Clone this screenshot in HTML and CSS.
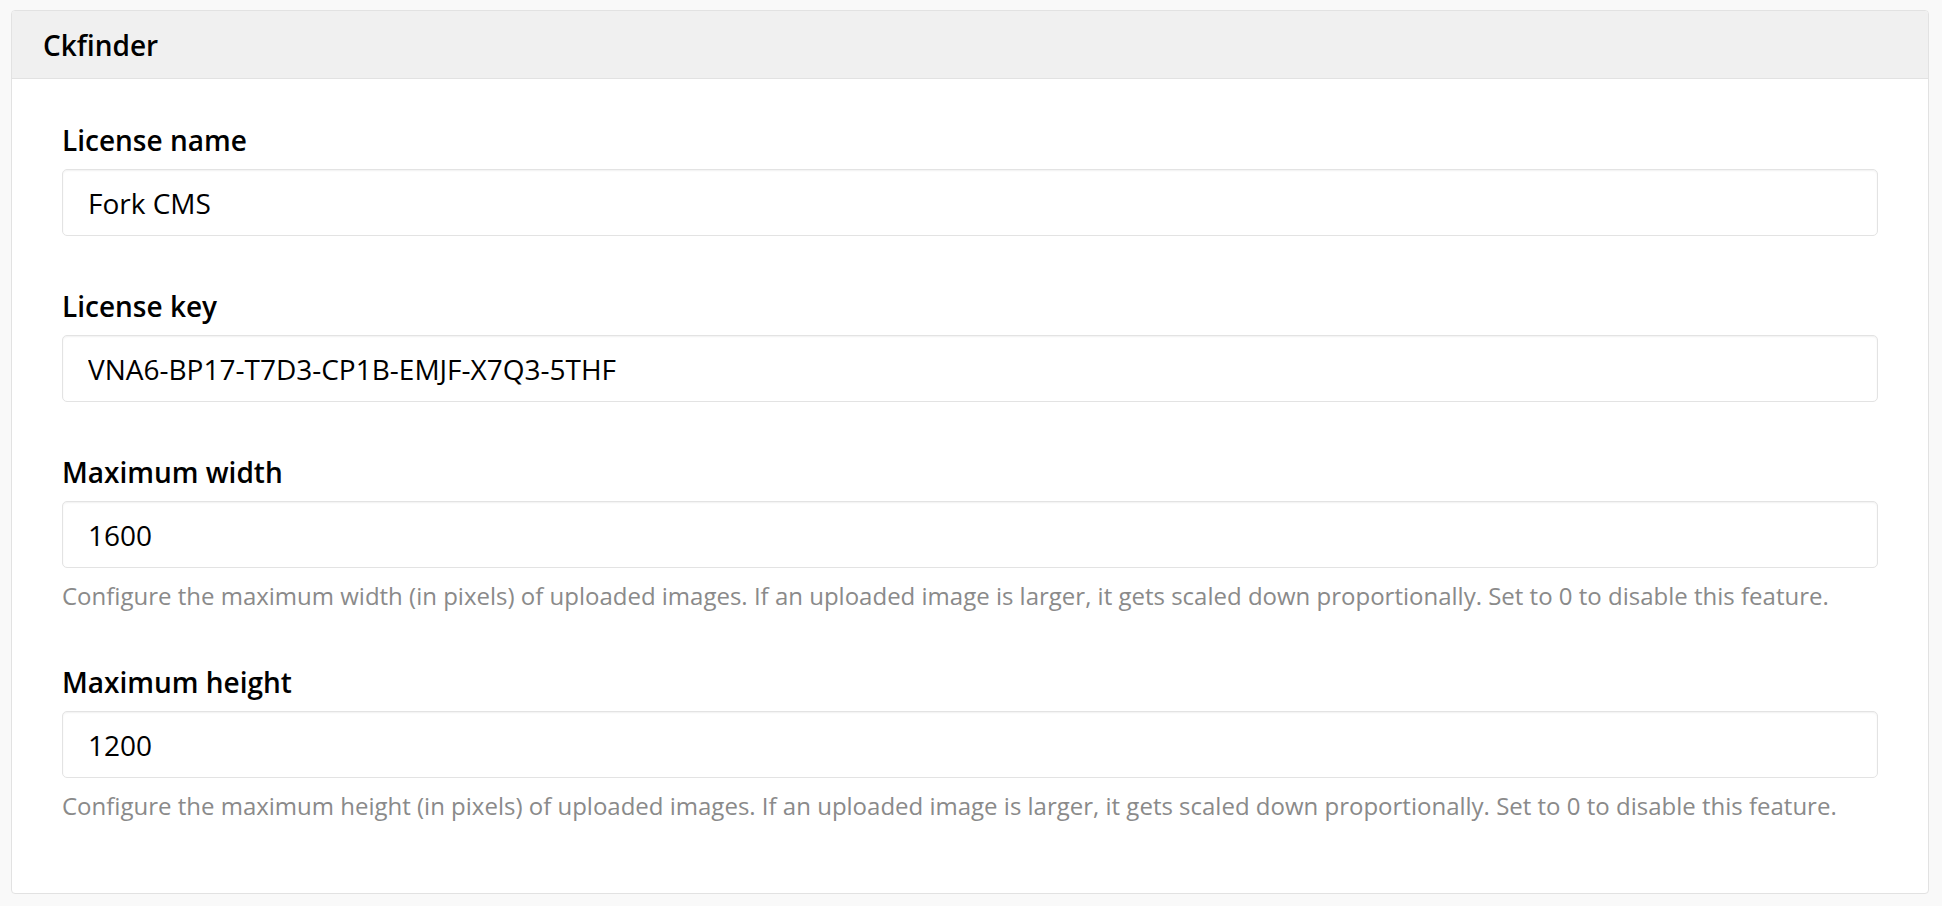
FILE: index.html
```html
<!DOCTYPE html>
<html lang="en">
<head>
<meta charset="utf-8">
<title>Ckfinder settings</title>
<link rel="stylesheet" href="styles.css">
</head>
<body>
<div class="panel">
  <div class="panel-heading">
    <h3 class="panel-title">Ckfinder</h3>
  </div>
  <div class="panel-body">
    <div class="form-group">
      <label class="control-label" for="license-name">License name</label>
      <input class="form-control" id="license-name" type="text" value="Fork CMS">
    </div>
    <div class="form-group">
      <label class="control-label" for="license-key">License key</label>
      <input class="form-control" id="license-key" type="text" value="VNA6-BP17-T7D3-CP1B-EMJF-X7Q3-5THF">
    </div>
    <div class="form-group">
      <label class="control-label" for="max-width">Maximum width</label>
      <input class="form-control" id="max-width" type="text" value="1600">
      <p class="help-block">Configure the maximum width (in pixels) of uploaded images. If an uploaded image is larger, it gets scaled down proportionally. Set to 0 to disable this feature.</p>
    </div>
    <div class="form-group">
      <label class="control-label" for="max-height">Maximum height</label>
      <input class="form-control" id="max-height" type="text" value="1200">
      <p class="help-block">Configure the maximum height (in pixels) of uploaded images. If an uploaded image is larger, it gets scaled down proportionally. Set to 0 to disable this feature.</p>
    </div>
  </div>
</div>
</body>
</html>
```

FILE: styles.css
```css
* {
  box-sizing: border-box;
}

html, body {
  margin: 0;
  padding: 0;
}

body {
  background: #f9f9f9;
  font-family: "Open Sans", "Liberation Sans", sans-serif;
  color: #000;
  padding: 10px 13px 12px 11px;
}

.panel {
  background: #fff;
  border: 1px solid #e2e2e2;
  border-radius: 4px;
  overflow: hidden;
}

.panel-heading {
  height: 68px;
  display: flex;
  align-items: center;
  padding: 0 31px;
  background: #f0f0f0;
  border-bottom: 1px solid #e2e2e2;
}

.panel-title {
  margin: 0;
  font-size: 28px;
  font-weight: 600;
  line-height: 1;
  color: #000;
}

.panel-body {
  padding: 44px 50px 71px 50px;
}

.form-group {
  display: flex;
  flex-direction: column;
  margin-bottom: 53px;
}

.form-group:last-child {
  margin-bottom: 0;
}

.control-label {
  font-size: 28px;
  font-weight: 600;
  line-height: 35px;
  margin-bottom: 11px;
}

.form-control {
  height: 67px;
  width: 100%;
  padding: 0 25px;
  font-family: inherit;
  font-size: 28px;
  color: #000;
  background: #fff;
  border: 1px solid #e3e3e3;
  border-radius: 5px;
  box-shadow: inset 0 1px 2px rgba(0, 0, 0, 0.06);
  outline: none;
}

.help-block {
  margin: 12px 0 0;
  font-size: 24px;
  line-height: 32px;
  color: #8a8a8a;
}
```
